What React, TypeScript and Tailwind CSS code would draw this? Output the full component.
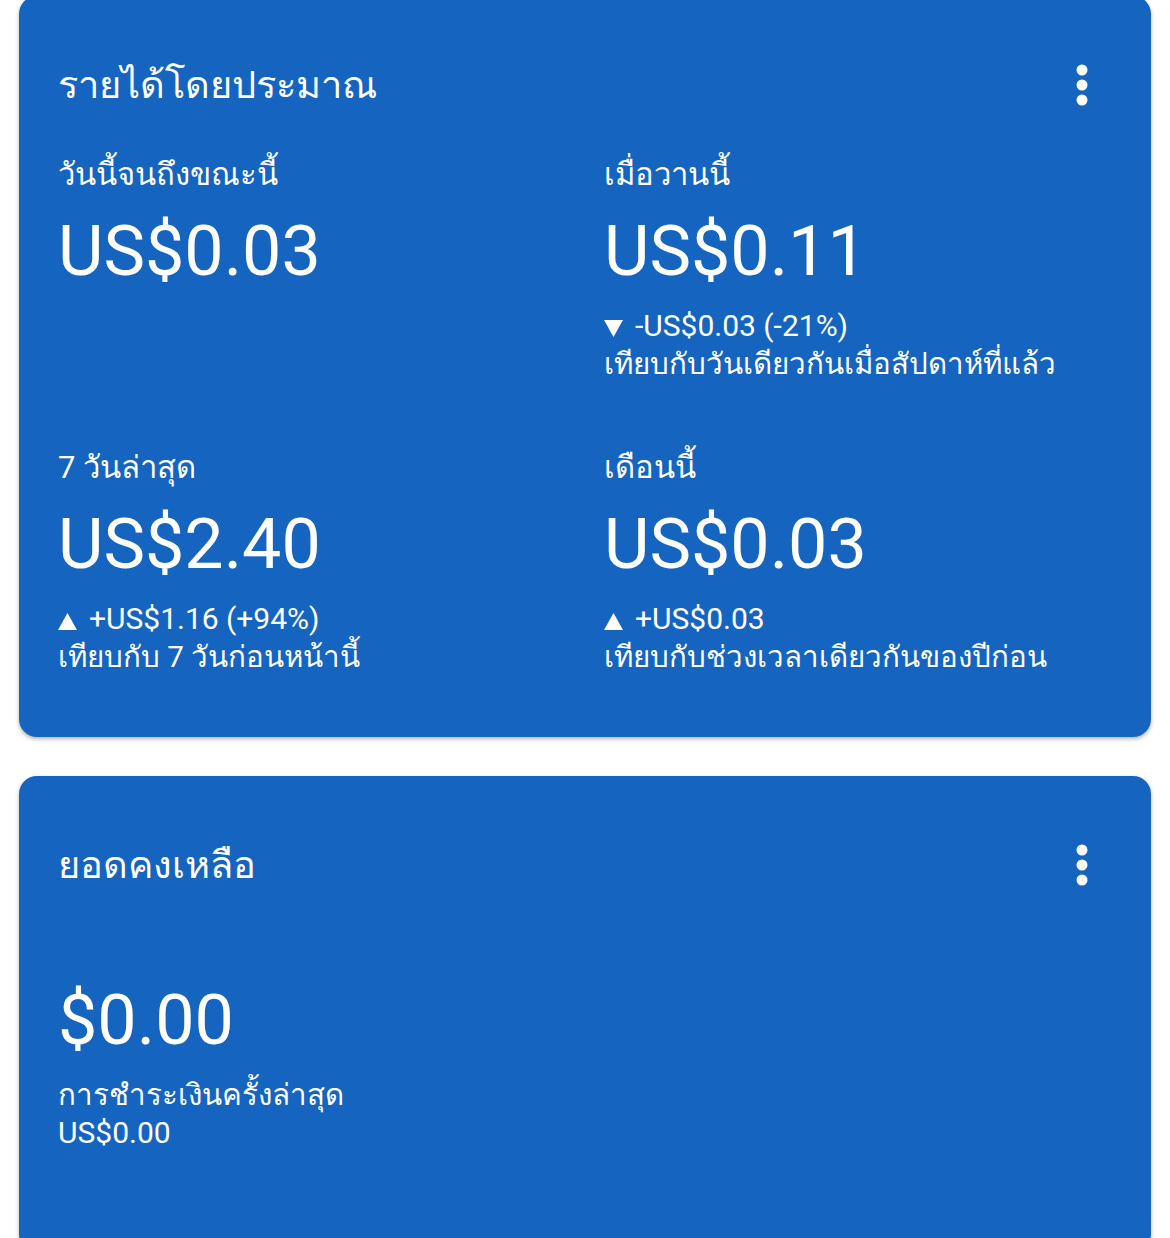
import React from "react";

const Dots = () => (
  <svg width="12" height="42" viewBox="0 0 12 42" className="shrink-0">
    <circle cx="6" cy="6" r="5.5" fill="white" />
    <circle cx="6" cy="21" r="5.5" fill="white" />
    <circle cx="6" cy="36" r="5.5" fill="white" />
  </svg>
);

const Tri = ({ up }: { up: boolean }) => (
  <svg width="19" height="17" viewBox="0 0 19 17" className="inline-block mr-[12px] align-[-1px]">
    {up ? <polygon points="9.5,0 19,17 0,17" fill="white" /> : <polygon points="0,0 19,0 9.5,17" fill="white" />}
  </svg>
);

type StatProps = { label: string; value: string; change?: string; up?: boolean; compare?: string };

const Stat = ({ label, value, change, up, compare }: StatProps) => (
  <div className="flex flex-col">
    <div className="text-[31px] leading-[44px]">{label}</div>
    <div className="text-[70px] leading-[80px] mt-[14px]">{value}</div>
    {change && (
      <div className="mt-[16px] text-[30px] leading-[38px]">
        <Tri up={!!up} />
        {change}
      </div>
    )}
    {compare && <div className="text-[29.5px] leading-[38px]">{compare}</div>}
  </div>
);

export default function App() {
  return (
    <div
      className="w-[1170px] h-[1238px] overflow-hidden bg-white text-white"
      style={{ fontFamily: 'Roboto, "Noto Sans", sans-serif' }}
    >
      <div className="px-[19px] mt-[-4px] flex flex-col gap-[39px]">
        <div className="bg-[#1565c0] rounded-[18px] shadow-[0_2px_4px_rgba(0,0,0,0.3)] pl-[39px] pr-[63px] pt-[64px] pb-[61px]">
          <div className="flex items-center justify-between">
            <div className="text-[38px] leading-[50px]">รายได้โดยประมาณ</div>
            <Dots />
          </div>
          <div className="grid grid-cols-[546px_1fr] gap-y-[63px] mt-[43px]">
            <Stat label="วันนี้จนถึงขณะนี้" value="US$0.03" />
            <Stat
              label="เมื่อวานนี้"
              value="US$0.11"
              change="-US$0.03 (-21%)"
              up={false}
              compare="เทียบกับวันเดียวกันเมื่อสัปดาห์ที่แล้ว"
            />
            <Stat
              label="7 วันล่าสุด"
              value="US$2.40"
              change="+US$1.16 (+94%)"
              up
              compare="เทียบกับ 7 วันก่อนหน้านี้"
            />
            <Stat
              label="เดือนนี้"
              value="US$0.03"
              change="+US$0.03"
              up
              compare="เทียบกับช่วงเวลาเดียวกันของปีก่อน"
            />
          </div>
        </div>
        <div className="bg-[#1565c0] rounded-[18px] shadow-[0_2px_4px_rgba(0,0,0,0.3)] pl-[39px] pr-[63px] pt-[64px] pb-[100px]">
          <div className="flex items-center justify-between">
            <div className="text-[38px] leading-[50px]">ยอดคงเหลือ</div>
            <Dots />
          </div>
          <div className="text-[70px] leading-[80px] mt-[90px]">$0.00</div>
          <div className="text-[29.5px] leading-[38px] mt-[16px]">การชำระเงินครั้งล่าสุด</div>
          <div className="text-[30px] leading-[38px]">US$0.00</div>
        </div>
      </div>
    </div>
  );
}
